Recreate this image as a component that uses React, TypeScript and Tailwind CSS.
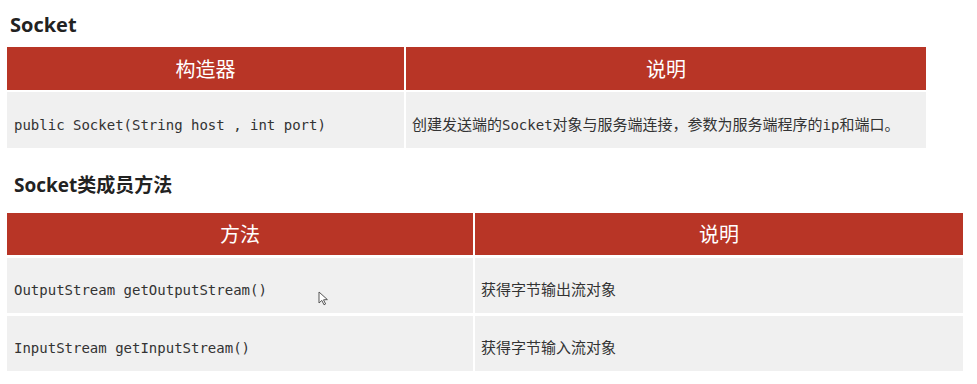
const mono = "font-['DejaVu_Sans_Mono','Noto_Sans_CJK_SC',monospace]";
const cjk = "font-['Noto_Sans_CJK_SC','Liberation_Sans',sans-serif]";

const ctorRows = [
    { code: "public Socket(String host , int port)", desc: "创建发送端的Socket对象与服务端连接，参数为服务端程序的ip和端口。" },
];

const methodRows = [
    { code: "OutputStream getOutputStream()", desc: "获得字节输出流对象" },
    { code: "InputStream getInputStream()", desc: "获得字节输入流对象" },
];

const Desc = ({ text }: { text: string }) => {
    // latin words in the description are set in the mono face, as in the slide
    const parts = text.split(/([A-Za-z]+)/);
    return (
        <span className={`${cjk} text-[15px]`}>
            {parts.map((p, i) =>
                /^[A-Za-z]+$/.test(p) ? <span key={i} className={`${mono} text-[14px]`}>{p}</span> : <span key={i}>{p}</span>
            )}
        </span>
    );
};

const Cursor = () => (
    <svg className="absolute left-[318px] top-[291px]" width="11" height="15" viewBox="0 0 11 15">
        <path d="M1 1 L1 12 L3.8 9.4 L6 13.8 L7.6 13 L5.5 8.8 L9.4 8.6 Z" fill="#fff" stroke="#555" strokeWidth="1" strokeLinejoin="round" />
    </svg>
);

export default function App() {
    return (
        <div className="relative w-[977px] h-[384px] bg-white overflow-hidden text-[#333]">
            <div className="pl-[10px] pt-[11px] h-[47px] font-['Open_Sans',sans-serif] font-bold text-[20px] leading-[28px] text-[#222]">Socket</div>
            <div className="ml-[7px] w-[919px] grid grid-cols-[397px_1fr] gap-x-[2px] gap-y-[2px]">
                <div className={`h-[43px] bg-[#b83526] text-white flex items-center justify-center text-[20px] ${cjk}`}>构造器</div>
                <div className={`h-[43px] bg-[#b83526] text-white flex items-center justify-center text-[20px] ${cjk}`}>说明</div>
                {ctorRows.map((r, i) => (
                    <>
                        <div key={`c${i}`} className={`h-[56px] bg-[#f0f0f0] flex items-center pl-[7px] pt-[10px] text-[14px] ${mono}`}>{r.code}</div>
                        <div key={`d${i}`} className="h-[56px] bg-[#f0f0f0] flex items-center pl-[6px] pt-[8px]"><Desc text={r.desc} /></div>
                    </>
                ))}
            </div>
            <div className="pl-[14px] pt-[23px] h-[65px] font-['Open_Sans','Noto_Sans_CJK_SC',sans-serif] font-bold text-[19px] leading-[28px] text-[#222]">Socket类成员方法</div>
            <div className="ml-[7px] w-[956px] grid grid-cols-[466px_1fr] gap-x-[2px] gap-y-[3px]">
                <div className={`h-[42px] bg-[#b83526] text-white flex items-center justify-center text-[20px] ${cjk}`}>方法</div>
                <div className={`h-[42px] bg-[#b83526] text-white flex items-center justify-center text-[20px] ${cjk}`}>说明</div>
                {methodRows.map((r, i) => (
                    <>
                        <div key={`c${i}`} className={`h-[55px] bg-[#f0f0f0] flex items-center pl-[7px] pt-[10px] text-[14px] ${mono}`}>{r.code}</div>
                        <div key={`d${i}`} className="h-[55px] bg-[#f0f0f0] flex items-center pl-[6px] pt-[8px]"><Desc text={r.desc} /></div>
                    </>
                ))}
            </div>
            <Cursor />
        </div>
    );
}
